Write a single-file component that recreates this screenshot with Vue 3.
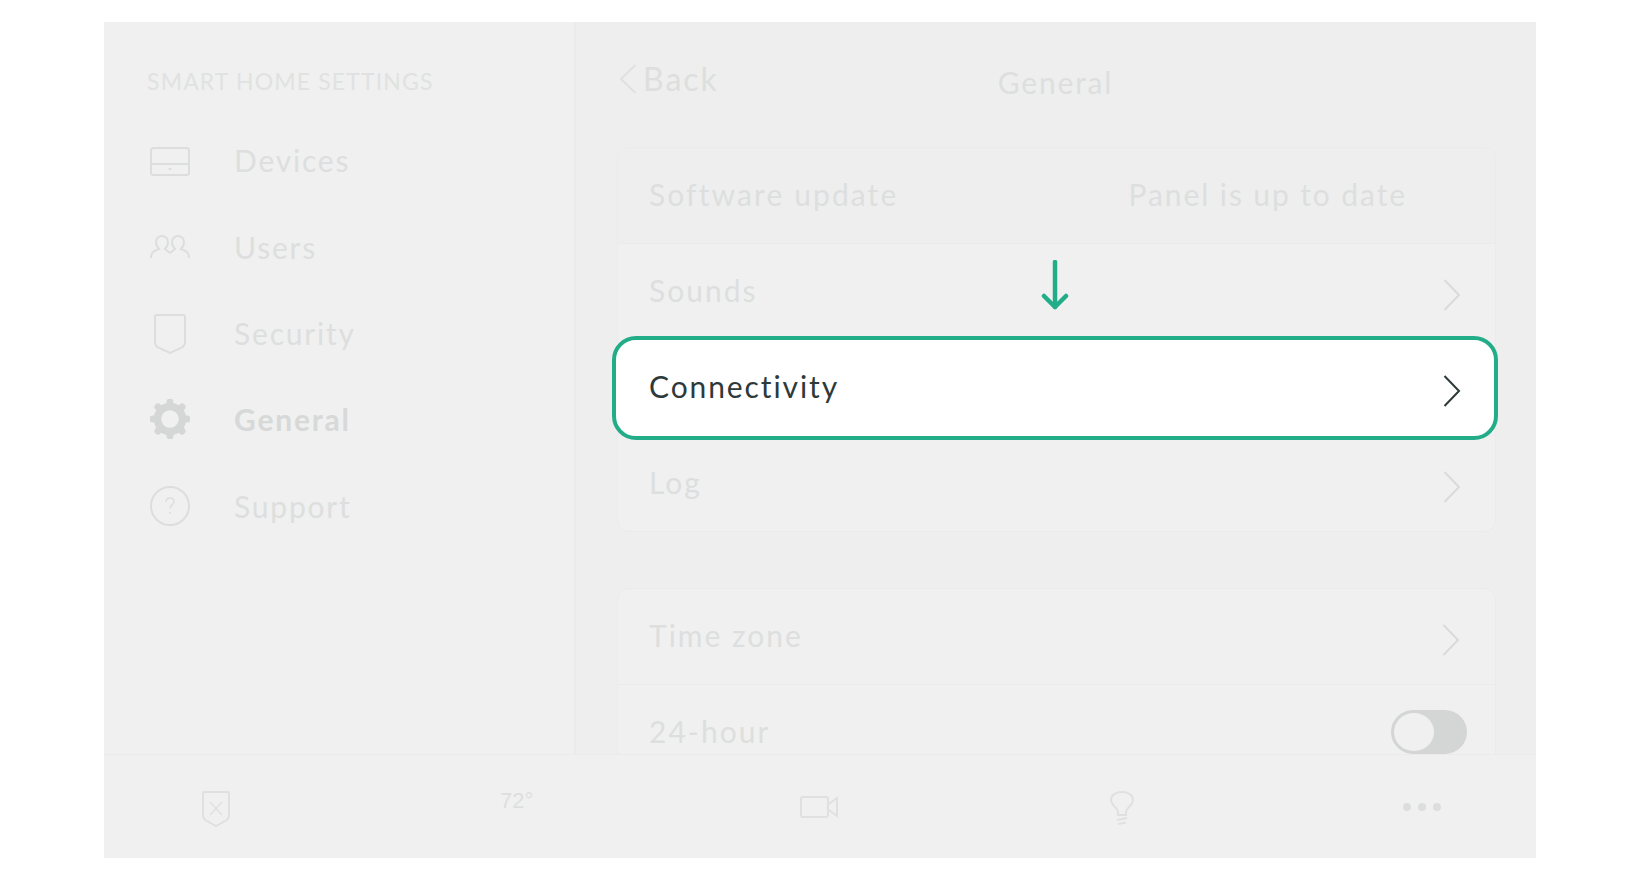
<template>
  <div class="page">
    <div class="panel">
      <div class="top">
        <aside class="sidebar">
          <h2 class="sidebar__title">SMART HOME SETTINGS</h2>
          <nav class="nav">
            <div
              v-for="item in navItems"
              :key="item.name"
              class="nav__item"
              :class="{ 'nav__item--active': item.active }"
            >
              <span class="nav__icon">
                <svg v-if="item.name === 'Devices'" width="40" height="32" viewBox="0 0 40 32" fill="none" stroke="#dcdedd" stroke-width="2">
                  <rect x="1" y="4" width="38" height="27" rx="2.5" />
                  <path d="M1 20h38" />
                  <path d="M18.500 25h3" />
                </svg>
                <svg v-else-if="item.name === 'Users'" class="nav__users" width="40" height="24" viewBox="0 0 40 24" fill="none" stroke="#dcdedd" stroke-width="2">
                  <path d="M1 24c0-5 2-7 8-9-2-2-3-4-3-7a6 6 0 0 1 12 0c0 3-1 5-3 7l5 4" />
                  <path d="M39 24c0-5-2-7-8-9 2-2 3-4 3-7a6 6 0 0 0-12 0c0 3 1 5 3 7l-5 4" />
                </svg>
                <svg v-else-if="item.name === 'Security'" class="nav__shield" width="34" height="42" viewBox="0 0 34 42" fill="none" stroke="#dcdedd" stroke-width="2">
                  <path d="M4 2h26a2 2 0 0 1 2 2v25c0 2-.6 3.400-2 4.800L17 40 4 33.800C2.600 32.400 2 31 2 29V4a2 2 0 0 1 2-2z" />
                </svg>
                <svg v-else-if="item.name === 'General'" width="40" height="40" viewBox="0 0 40 40" fill="none" stroke="#d5d7d6">
                  <circle cx="20" cy="20" r="12.500" stroke-width="7.500" />
                  <path
                    v-for="angle in teeth"
                    :key="angle"
                    d="M20 3v4"
                    stroke-width="7"
                    stroke-linecap="round"
                    :transform="`rotate(${angle} 20 20)`"
                  />
                </svg>
                <svg v-else width="40" height="40" viewBox="0 0 40 40" fill="none" stroke="#dcdedd" stroke-width="2">
                  <circle cx="20" cy="20" r="19" />
                  <path d="M16 16c0-2.500 1.800-4 4-4s4 1.500 4 3.800c0 3-4 3.200-4 6.700" stroke-width="1.500" />
                  <circle cx="20" cy="27" r="1" fill="#dcdedd" stroke="none" />
                </svg>
              </span>
              <span class="nav__label">{{ item.name }}</span>
            </div>
          </nav>
        </aside>

        <main class="main">
          <header class="header">
            <div class="header__back">
              <svg width="18" height="30" viewBox="0 0 18 30" fill="none" stroke="#dfe1e0" stroke-width="2">
                <path d="M16.500 1 2 15l14.500 14" />
              </svg>
              <span>Back</span>
            </div>
            <div class="header__title">General</div>
          </header>

          <section class="card">
            <div class="row row--plain">
              <span>Software update</span>
              <span class="row__status">Panel is up to date</span>
            </div>
            <div class="row">
              <span>Sounds</span>
              <svg class="row__chevron" width="18" height="32" viewBox="0 0 18 32" fill="none" stroke="#d9dbda" stroke-width="2">
                <path d="M1.500 1 16 16 1.500 31" />
              </svg>
              <svg class="row__arrow" width="28" height="50" viewBox="0 0 28 50" fill="none" stroke="#22ad88" stroke-width="4.500" stroke-linecap="round" stroke-linejoin="round">
                <path d="M14 2v45" />
                <path d="M3 36l11 11 11-11" />
              </svg>
            </div>
            <div class="row row--highlight">
              <span>Connectivity</span>
              <svg class="row__chevron" width="18" height="32" viewBox="0 0 18 32" fill="none" stroke="#2e3a3a" stroke-width="2">
                <path d="M1.500 1 16 16 1.500 31" />
              </svg>
            </div>
            <div class="row">
              <span>Log</span>
              <svg class="row__chevron" width="18" height="32" viewBox="0 0 18 32" fill="none" stroke="#d9dbda" stroke-width="2">
                <path d="M1.500 1 16 16 1.500 31" />
              </svg>
            </div>
          </section>

          <section class="card card--second">
            <div class="row">
              <span>Time zone</span>
              <svg class="row__chevron row__chevron--shift" width="18" height="32" viewBox="0 0 18 32" fill="none" stroke="#d9dbda" stroke-width="2">
                <path d="M1.500 1 16 16 1.500 31" />
              </svg>
            </div>
            <div class="row">
              <span>24-hour</span>
              <span class="toggle"><span class="toggle__knob"></span></span>
            </div>
          </section>
        </main>
      </div>

      <footer class="bar">
        <span class="bar__item bar__item--shield">
          <svg width="30" height="38" viewBox="0 0 30 38" fill="none" stroke="#dfe1e0" stroke-width="2">
            <path d="M3 2h24a1 1 0 0 1 1 1v22c0 2-.6 3.400-2 4.800L15 36 4 29.800C2.600 28.400 2 27 2 25V3a1 1 0 0 1 1-1z" />
            <path d="M9 12l12 13M21 12 9 25" stroke-width="1.500" />
          </svg>
        </span>
        <span class="bar__item bar__temp">72°</span>
        <span class="bar__item">
          <svg width="38" height="24" viewBox="0 0 38 24" fill="none" stroke="#dfe1e0" stroke-width="2">
            <rect x="1" y="2" width="27" height="20" rx="2" />
            <path d="M29 9l8-6v18l-8-6" />
          </svg>
        </span>
        <span class="bar__item bar__item--bulb">
          <svg width="24" height="36" viewBox="0 0 24 36" fill="none" stroke="#dfe1e0" stroke-width="2">
            <path d="M8 24v-3c0-2-1-3-3-5-2-2-4-4-4-7.500C1 4 6 1 12 1s11 3 11 7.500c0 3.500-2 5.500-4 7.500-2 2-3 3-3 5v3z" />
            <path d="M7 29l10-2M8 33l8-1.500" />
          </svg>
        </span>
        <span class="bar__item bar__dots">
          <i></i><i></i><i></i>
        </span>
      </footer>
    </div>
  </div>
</template>

<script setup>
const navItems = [
  { name: "Devices" },
  { name: "Users" },
  { name: "Security" },
  { name: "General", active: true },
  { name: "Support" },
];

const teeth = [0, 45, 90, 135, 180, 225, 270, 315];
</script>

<style>
html,
body {
  margin: 0;
  background: #fff;
}
</style>

<style scoped>
.page {
  width: 1640px;
  height: 880px;
  padding: 22px 104px;
  box-sizing: border-box;
  font-family: Lato, "Open Sans", sans-serif;
}

.panel {
  height: 836px;
  display: flex;
  flex-direction: column;
  background: #f0f0f0;
}

.top {
  flex: 1;
  min-height: 0;
  display: flex;
  overflow: hidden;
}

.sidebar {
  width: 472px;
  flex-shrink: 0;
  box-sizing: border-box;
  padding: 46px 0 0 43px;
  background: #f0f0f0;
  border-right: 2px solid #ebebeb;
}

.sidebar__title {
  margin: 0 0 23px;
  font-size: 23px;
  line-height: 26px;
  font-weight: 400;
  letter-spacing: 1.150px;
  color: #e0e2e1;
}

.nav {
  padding-left: 3px;
}

.nav__item {
  height: 86.4px;
  display: flex;
  align-items: center;
  gap: 44px;
  font-size: 30px;
  letter-spacing: 1.800px;
  color: #dddfde;
}

.nav__item--active {
  font-weight: 700;
  color: #d7d9d8;
}

.nav__icon {
  width: 40px;
  display: flex;
  justify-content: center;
}

.nav__users {
  margin-top: -2px;
}

.nav__shield {
  margin-top: 3px;
}

.main {
  flex: 1;
  min-width: 0;
  padding: 0 40px 0 41px;
  background: #eeeeee;
}

.header {
  position: relative;
  height: 125px;
  box-sizing: border-box;
  color: #dddfde;
}

.header__back {
  display: flex;
  align-items: center;
  gap: 6px;
  padding: 42px 0 0 2px;
  font-size: 32px;
  line-height: 30px;
  letter-spacing: 2px;
}

.header__title {
  position: absolute;
  left: -2px;
  right: 0;
  top: 42px;
  text-align: center;
  font-size: 30px;
  line-height: 36px;
  letter-spacing: 1.800px;
}

.card {
  border: 1px solid #ebebeb;
  border-radius: 12px;
  background: #f0f0f0;
}

.card--second {
  margin-top: 56px;
}

.row {
  position: relative;
  height: 96px;
  box-sizing: border-box;
  display: flex;
  align-items: center;
  justify-content: space-between;
  padding: 0 34px 4px 31px;
  font-size: 30px;
  letter-spacing: 2px;
  color: #dddfde;
  border-top: 1px solid #ebebeb;
}

.row:first-child {
  height: 95px;
  border-top: 0;
  border-radius: 12px 12px 0 0;
}

.row:last-child {
  border-radius: 0 0 12px 12px;
}

.row--plain {
  background: #eeeeee;
  letter-spacing: 2.100px;
}

.row__status {
  margin-right: 54px;
  letter-spacing: 1.900px;
}

.row__chevron {
  margin-top: 10px;
}

.row__chevron--shift {
  margin-right: 1px;
}

.row__arrow {
  position: absolute;
  left: 423px;
  top: 16px;
}

.row--highlight {
  z-index: 1;
  height: 104px;
  margin: -3px -3px -5px -6px;
  padding: 0 33px 4px 33px;
  letter-spacing: 1.900px;
  background: #fff;
  border: 4px solid #22ad88;
  border-radius: 24px;
  color: #2e3a3a;
}

.toggle {
  width: 76px;
  height: 44px;
  box-sizing: border-box;
  display: block;
  margin: 3px -6px 0 0;
  padding: 3px;
  background: #d4d6d5;
  border-radius: 22px;
}

.toggle__knob {
  display: block;
  width: 40px;
  height: 38px;
  background: #f0f0f0;
  border-radius: 50%;
}

.bar {
  height: 104px;
  flex-shrink: 0;
  box-sizing: border-box;
  display: flex;
  align-items: center;
  justify-content: space-between;
  padding: 0 87px 0 84px;
  background: #f0f0f0;
  border-top: 1px solid #ebebeb;
}

.bar__item {
  width: 54px;
  display: flex;
  justify-content: center;
}

.bar__item--shield {
  margin: 4px 0 0;
  transform: translateX(1px);
}

.bar__item--bulb {
  margin-top: 5px;
  transform: translateX(2px);
}

.bar__temp {
  margin-top: -12px;
  font-family: "Liberation Sans", sans-serif;
  font-size: 22px;
  color: #dddfde;
}

.bar__dots {
  gap: 7px;
}

.bar__dots i {
  width: 8px;
  height: 8px;
  border-radius: 50%;
  background: #dcdedd;
}
</style>
